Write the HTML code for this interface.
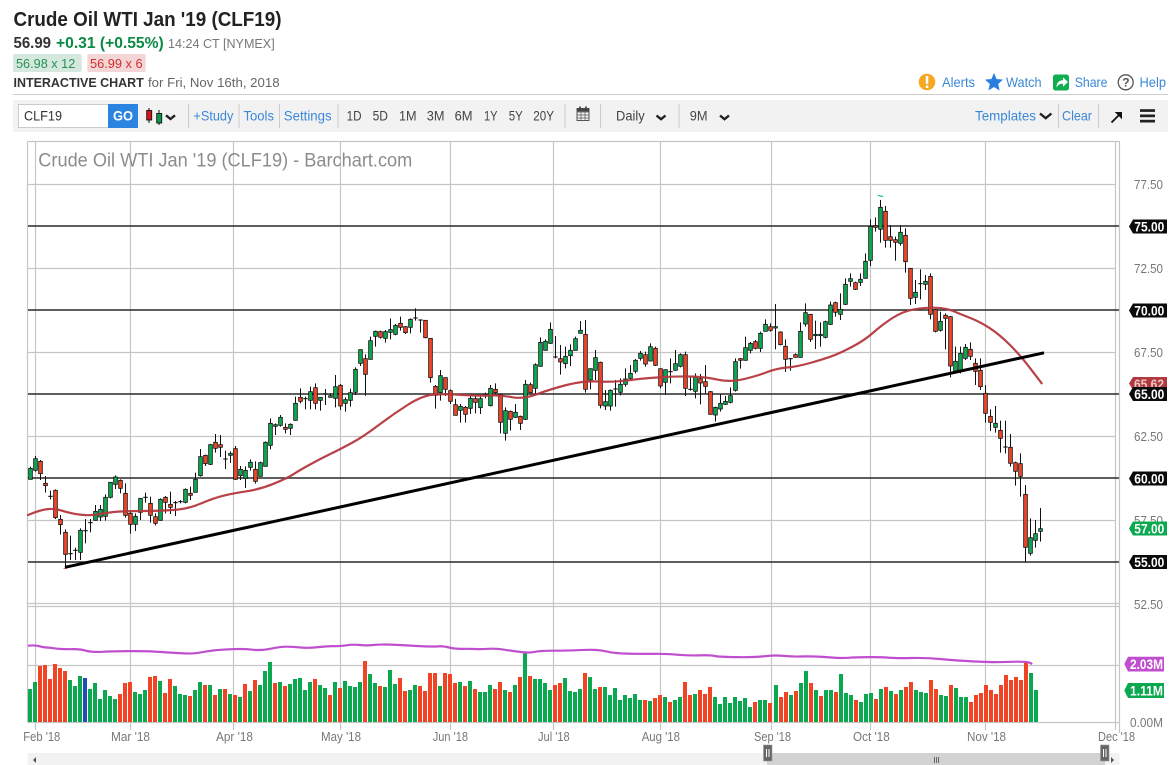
<!DOCTYPE html>
<html lang="en"><head><meta charset="utf-8"><title>Crude Oil WTI Jan '19 (CLF19)</title>
<style>
html,body{margin:0;padding:0;background:#fff;width:1173px;height:765px;overflow:hidden}
svg{display:block;position:absolute;left:0;top:0}
text{font-family:"Liberation Sans",sans-serif}
.b{fill:#3b88d8;font-size:14px}
.k{fill:#444;font-size:13.5px}
.ax{fill:#777;font-size:13px}
.tg{fill:#fff;font-size:14px;font-weight:bold}
.dt{fill:#777;font-size:13px}
</style></head><body>
<svg xmlns="http://www.w3.org/2000/svg" width="1173" height="765" viewBox="0 0 1173 765">
<!-- header -->
<text x="13.5" y="26" font-size="20" font-weight="bold" fill="#222" textLength="268" lengthAdjust="spacingAndGlyphs">Crude Oil WTI Jan '19 (CLF19)</text>
<text x="13.5" y="48" font-size="16" font-weight="bold" fill="#333" textLength="37.5" lengthAdjust="spacingAndGlyphs">56.99</text>
<text x="56" y="48" font-size="16" font-weight="bold" fill="#0b8a45" textLength="107.7" lengthAdjust="spacingAndGlyphs">+0.31 (+0.55%)</text>
<text x="168" y="48" font-size="13" fill="#777" textLength="106.7" lengthAdjust="spacingAndGlyphs">14:24 CT [NYMEX]</text>
<rect x="13" y="54" width="68.7" height="18" rx="2" fill="#d4e8dd"/>
<text x="16" y="68" font-size="13" fill="#2a9159" textLength="59.3" lengthAdjust="spacingAndGlyphs">56.98 x 12</text>
<rect x="87.3" y="54" width="58.4" height="18" rx="2" fill="#f4d6d6"/>
<text x="90" y="68" font-size="13" fill="#d32f2f" textLength="52.6" lengthAdjust="spacingAndGlyphs">56.99 x 6</text>
<text x="13.5" y="87" font-size="13" font-weight="bold" fill="#333" textLength="130.3" lengthAdjust="spacingAndGlyphs">INTERACTIVE CHART</text>
<text x="148" y="87" font-size="13" fill="#666" textLength="131.6" lengthAdjust="spacingAndGlyphs">for Fri, Nov 16th, 2018</text>
<rect x="13" y="94" width="1155" height="1" fill="#ccc"/>
<!-- top-right actions -->
<circle cx="927" cy="82" r="8.3" fill="#f7a823"/><rect x="925.8" y="76" width="2.5" height="8" fill="#fff"/><rect x="925.8" y="85.5" width="2.5" height="2.5" fill="#fff"/>
<text x="942" y="87" class="b" textLength="33" lengthAdjust="spacingAndGlyphs">Alerts</text>
<polygon points="994,73 996.6,79 1003,79.6 998.2,84 999.6,90.5 994,87 988.4,90.5 989.8,84 985,79.6 991.4,79" fill="#2a7fde"/>
<text x="1006" y="87" class="b" textLength="35.6" lengthAdjust="spacingAndGlyphs">Watch</text>
<rect x="1053" y="74.5" width="16" height="16" rx="2.5" fill="#0fae4f"/><path d="M1056.5 87.5c0-5 2.7-7.3 6.5-7.3v-3l5 4.8-5 4.8v-3c-3 0-4.8.9-6.5 3.7z" fill="#fff"/>
<text x="1074.7" y="87" class="b" textLength="32.8" lengthAdjust="spacingAndGlyphs">Share</text>
<circle cx="1125.7" cy="82.3" r="7.5" fill="none" stroke="#555" stroke-width="1.3"/><text x="1122.3" y="86.7" font-size="12" font-weight="bold" fill="#555">?</text>
<text x="1139.5" y="87" class="b" textLength="26.5" lengthAdjust="spacingAndGlyphs">Help</text>
<!-- toolbar -->
<rect x="13" y="100" width="1155" height="32" fill="#f2f2f2"/>
<rect x="18.5" y="104.5" width="90" height="23" fill="#fff" stroke="#ccc"/>
<text x="24" y="120.5" font-size="14" fill="#333" textLength="38" lengthAdjust="spacingAndGlyphs">CLF19</text>
<rect x="108" y="104" width="30" height="24" fill="#2a84e0"/>
<text x="113" y="120.5" font-size="14" font-weight="bold" fill="#fff" textLength="20" lengthAdjust="spacingAndGlyphs">GO</text>
<path d="M149 108v15M159 110v15" stroke="#111" fill="none"/>
<rect x="146.7" y="110.5" width="5" height="9.5" fill="#d6141a" stroke="#111" stroke-width=".9"/>
<rect x="156.7" y="113.500" width="5" height="9.5" fill="#079a48" stroke="#111" stroke-width=".9"/>
<g fill="none" stroke="#222" stroke-width="2.4"><path d="M166 115.3l4.500 3.700 4.500-3.700"/><path d="M656.5 115.5l4.500 3.700 4.500-3.700"/><path d="M720 115.5l4.500 3.700 4.500-3.700"/><path d="M1040 113.5l5.700 4.700 5.700-4.700"/></g>
<g fill="#ccc"><rect x="188" y="104" width="1" height="24"/><rect x="238.5" y="104" width="1" height="24"/><rect x="279" y="104" width="1" height="24"/><rect x="337.5" y="104" width="1" height="24"/><rect x="564.5" y="104" width="1" height="24"/><rect x="600" y="104" width="1" height="24"/><rect x="678.5" y="104" width="1" height="24"/><rect x="1058" y="104" width="1" height="24"/><rect x="1098" y="104" width="1" height="24"/></g>
<text x="193.4" y="120.5" class="b" textLength="40" lengthAdjust="spacingAndGlyphs">+Study</text>
<text x="243.5" y="120.5" class="b" textLength="30.5" lengthAdjust="spacingAndGlyphs">Tools</text>
<text x="283.8" y="120.5" class="b" textLength="47.8" lengthAdjust="spacingAndGlyphs">Settings</text>
<text x="346.6" y="120.5" class="k" textLength="15" lengthAdjust="spacingAndGlyphs">1D</text>
<text x="372.6" y="120.5" class="k" textLength="15.4" lengthAdjust="spacingAndGlyphs">5D</text>
<text x="399" y="120.5" class="k" textLength="17.6" lengthAdjust="spacingAndGlyphs">1M</text>
<text x="426.8" y="120.5" class="k" textLength="17.7" lengthAdjust="spacingAndGlyphs">3M</text>
<text x="454.6" y="120.5" class="k" textLength="18" lengthAdjust="spacingAndGlyphs">6M</text>
<text x="484" y="120.5" class="k" textLength="13.6" lengthAdjust="spacingAndGlyphs">1Y</text>
<text x="508.8" y="120.5" class="k" textLength="14" lengthAdjust="spacingAndGlyphs">5Y</text>
<text x="533.3" y="120.5" class="k" textLength="20.7" lengthAdjust="spacingAndGlyphs">20Y</text>
<g fill="none" stroke="#555"><rect x="577" y="108.5" width="12" height="12" stroke-width="1"/><path d="M577 112h12M577 115h12M577 118h12M581 112v8M585 112v8" stroke-width=".7"/><path d="M580 106.5v3M586 106.5v3" stroke="#222" stroke-width="1.5"/></g>
<rect x="577" y="108" width="12" height="3.5" fill="#444"/>
<text x="616" y="120.5" class="k" textLength="28.7" lengthAdjust="spacingAndGlyphs">Daily</text>
<text x="689.8" y="120.5" class="k" textLength="17.8" lengthAdjust="spacingAndGlyphs">9M</text>
<text x="975" y="120.5" class="b" textLength="61" lengthAdjust="spacingAndGlyphs">Templates</text>
<text x="1062" y="120.5" class="b" textLength="30" lengthAdjust="spacingAndGlyphs">Clear</text>
<path d="M1111.5 122.5l8-8" fill="none" stroke="#111" stroke-width="1.9"/><polygon points="1122,112 1122,119.3 1114.700,112" fill="#111"/>
<rect x="1140" y="109.2" width="15" height="2.7" fill="#222"/><rect x="1140" y="114.5" width="15" height="2.7" fill="#222"/><rect x="1140" y="119.8" width="15" height="2.7" fill="#222"/>
<!-- chart frame and grid -->
<g id="grid" fill="none" stroke="#c6c6c6" stroke-width="1.2">
<path d="M27.5 141.5H1119.5V733M27.5 141.5V722M1115.5 141.5V730M27.5 603.5H1119.5M27.5 606.5H1119.5M27.5 722.5H1119.5M27.5 665.5H1119.5"/>
<path d="M28 184.5H1116M28 268.5H1116M28 352.5H1116M28 436.5H1116M28 520.5H1116"/>
<path d="M35.5 141V730M130.5 141V730M233.5 141V730M340.5 141V730M450.5 141V730M553.5 141V730M660.5 141V730M771.5 141V730M870.5 141V730M985.5 141V730"/>
</g>
<text x="38.3" y="166.7" font-size="19" fill="#8c8c8c" textLength="374" lengthAdjust="spacingAndGlyphs">Crude Oil WTI Jan '19 (CLF19) - Barchart.com</text>
<g fill="none" stroke="#2a2a2a" stroke-width="1.4"><path d="M28 226H1119M28 310H1119M28 394H1119M28 478H1119M28 562H1119"/></g>
<g id="vol"></g>
<g id="candles"></g>
<path d="M878 196q1.5-1 2.5 0t2.5 0" fill="none" stroke="#1ec96f" stroke-width="1.2"/>
<path d="M63.5 568.3h3.5" stroke="#f04424" stroke-width="1"/>
<path id="ma" fill="none" stroke="#b3383d" stroke-width="2.2" stroke-linejoin="round" stroke-linecap="round" opacity=".95" data-p="28,515 40,510 55,508.3 70,513.3 90,516 113,511.7 133,511 167,510.7 190,508.3 213,498.3 233,493.3 260,489.3 287,478.3 300,470 320,459 340,449.3 363.3,436.7 393.3,414 423.3,395 446.7,394 480,396 500,395 523.3,399.3 550,389.3 583,380.7 613,382.3 643,378.3 683,376 707,377.3 730,382.3 757,376 777,368.3 797,366.7 823,359.3 840,353.3 865,340 881.7,325 903.3,311 926.7,307.3 946.7,308.3 960,314 980,321.7 1000,335 1020,355 1041.7,383.3" d="M28 515L1041.7 383.3"/>
<path d="M65 567.3L1044 352.8" stroke="#000" stroke-width="3" fill="none"/>
<path id="pu" fill="none" stroke="#c04fd0" stroke-width="2.2" stroke-linejoin="round" data-p="28,645.7 35,645 43.3,647.3 50,647.7 56.7,648.7 66.7,649.3 80,649 91.7,652.3 113.3,651.3 143.3,651 166.7,652.3 191.7,654 206.7,651.3 220,649.7 243.3,648.7 261.7,650.7 280,646.7 293.3,646.7 308.3,648.3 328.3,646 340,646.3 353.3,644.3 366.7,645.7 380,644.3 400,645 416.7,646 433.3,646.7 443.3,646 455,649 470,648.7 480,649.3 496.7,648.3 511.7,651 530,653 540,650.7 566.7,650.7 586.7,649.7 600,650 615,653.3 640,654 666.7,653.7 686.7,655.7 710,655 720,657 753.3,657.3 766.7,656 776.7,655.3 793.3,656.7 806,656.3 823,656.7 840,658.3 856.3,657.3 879.7,657 896.3,658.3 926.3,657.7 953,660.3 979.7,661.7 996.3,662.3 1026.3,661.3 1032.3,664" d="M28 645.7L1032.3 664"/>
<!-- price axis -->
<g><text x="1134" y="189" class="ax" textLength="29" lengthAdjust="spacingAndGlyphs">77.50</text>
<text x="1134" y="273" class="ax" textLength="29" lengthAdjust="spacingAndGlyphs">72.50</text>
<text x="1134" y="357" class="ax" textLength="29" lengthAdjust="spacingAndGlyphs">67.50</text>
<text x="1134" y="441" class="ax" textLength="29" lengthAdjust="spacingAndGlyphs">62.50</text>
<text x="1134" y="525" class="ax" textLength="29" lengthAdjust="spacingAndGlyphs">57.50</text>
<text x="1134" y="609" class="ax" textLength="29" lengthAdjust="spacingAndGlyphs">52.50</text>
<text x="1130" y="727" class="ax" textLength="33" lengthAdjust="spacingAndGlyphs">0.00M</text></g>
<g>
<polygon points="1129,383.5 1133,377 1167,377 1167,390 1133,390" fill="#b3383d"/><text x="1134" y="389" font-size="14" fill="#e8c8c8" font-weight="bold" textLength="30" lengthAdjust="spacingAndGlyphs">65.62</text>
<g fill="#0a0a0a"><polygon points="1129,226.5 1133,219.5 1167,219.5 1167,233.5 1133,233.5"/><polygon points="1129,310.5 1133,303.5 1167,303.5 1167,317.5 1133,317.5"/><polygon points="1129,394 1133,387 1167,387 1167,401 1133,401"/><polygon points="1129,478.5 1133,471.5 1167,471.5 1167,485.5 1133,485.5"/><polygon points="1129,562 1133,555 1167,555 1167,569 1133,569"/></g>
<polygon points="1129,528.5 1133,521.5 1167,521.5 1167,535.5 1133,535.5" fill="#0aa84f"/>
<text x="1134.3" y="231.5" class="tg" textLength="30" lengthAdjust="spacingAndGlyphs">75.00</text>
<text x="1134.3" y="315.5" class="tg" textLength="30" lengthAdjust="spacingAndGlyphs">70.00</text>
<text x="1134.3" y="399" class="tg" textLength="30" lengthAdjust="spacingAndGlyphs">65.00</text>
<text x="1134.3" y="483.5" class="tg" textLength="30" lengthAdjust="spacingAndGlyphs">60.00</text>
<text x="1134.3" y="533.5" class="tg" textLength="30" lengthAdjust="spacingAndGlyphs">57.00</text>
<text x="1134.3" y="567" class="tg" textLength="30" lengthAdjust="spacingAndGlyphs">55.00</text>
<polygon points="1124.3,664 1128,656.7 1164,656.7 1164,671.5 1128,671.5" fill="#c04fd0"/>
<polygon points="1124.3,690.5 1128,683 1164,683 1164,698 1128,698" fill="#0aa84f"/>
<text x="1130" y="669" class="tg" textLength="33" lengthAdjust="spacingAndGlyphs">2.03M</text>
<text x="1130" y="695.5" class="tg" textLength="33" lengthAdjust="spacingAndGlyphs">1.11M</text>
</g>
<!-- date axis -->
<g><text x="23.3" y="741" class="dt" textLength="37" lengthAdjust="spacingAndGlyphs">Feb '18</text>
<text x="111" y="741" class="dt" textLength="39" lengthAdjust="spacingAndGlyphs">Mar '18</text>
<text x="216" y="741" class="dt" textLength="37" lengthAdjust="spacingAndGlyphs">Apr '18</text>
<text x="321" y="741" class="dt" textLength="40" lengthAdjust="spacingAndGlyphs">May '18</text>
<text x="432.7" y="741" class="dt" textLength="35.3" lengthAdjust="spacingAndGlyphs">Jun '18</text>
<text x="538" y="741" class="dt" textLength="31.7" lengthAdjust="spacingAndGlyphs">Jul '18</text>
<text x="641.7" y="741" class="dt" textLength="38.3" lengthAdjust="spacingAndGlyphs">Aug '18</text>
<text x="754" y="741" class="dt" textLength="37" lengthAdjust="spacingAndGlyphs">Sep '18</text>
<text x="853" y="741" class="dt" textLength="36.7" lengthAdjust="spacingAndGlyphs">Oct '18</text>
<text x="967" y="741" class="dt" textLength="39" lengthAdjust="spacingAndGlyphs">Nov '18</text>
<text x="1098" y="741" class="dt" textLength="37" lengthAdjust="spacingAndGlyphs">Dec '18</text></g>
<!-- scrollbar -->
<rect x="27.5" y="753" width="1092" height="12" fill="#f2f2f2"/>
<rect x="767" y="753" width="338" height="12" fill="#d2d2d2"/>
<path d="M36 757v6l-3-3zM1111 757v6l3-3z" fill="#555"/>
<rect x="763.5" y="745" width="8.5" height="16" fill="#666" stroke="#999" stroke-width=".6"/><path d="M766.5 749v8M769 749v8" stroke="#fff" stroke-width="1"/>
<rect x="1100.5" y="745" width="8.5" height="16" fill="#666" stroke="#999" stroke-width=".6"/><path d="M1103.5 749v8M1106 749v8" stroke="#fff" stroke-width="1"/>
<path d="M934.5 757v6M936.5 757v6M938.5 757v6" stroke="#666" stroke-width="1"/>
</svg>
<script>
var NS="http://www.w3.org/2000/svg";
function el(p,n,a){var e=document.createElementNS(NS,n);for(var k in a)e.setAttribute(k,a[k]);p.appendChild(e);return e;}
var G="#0aa84f",R="#f04424";
var segs=[
[0,370,"91 290 295 328 328 g,106 258 266 301 305 g,121 270 274 311 330 r,136 318 340 347 368 r,151 362 379 380 388 d,166 358 361 443 447 r,181 435 448 464 494 r,196 478 487 553 595 r,211 497 551 552 570 d,226 533 541 542 570 d,241 475 481 547 570 g,256 447 482 483 520 d,271 447 458 459 487 d,286 405 424 451 452 g,301 405 418 441 453 g,316 373 382 439 452 g,331 337 337 382 385 g,346 316 321 343 357 g,361 328 331 355 370 r,376 340 370 436 443 r,391 425 430 463 491 r,406 430 439 463 483 g,421 385 385 427 450 g,436 368 382 383 398 d,451 380 400 436 458 r,466 430 440 460 466 r,481 385 388 451 452 g,496 378 382 397 430 r,511 365 403 412 432 r,526 393 398 399 438 d,541 390 395 396 400 d,556 355 358 397 400 g,571 350 370 376 390 r,586 308 328 367 368 g,601 237 260 317 320 g,616 254 256 281 288 r,631 222 224 283 285 g,646 192 217 235 248 r,661 195 224 232 261 r,676 242 267 268 297 d,691 244 250 256 279 g,706 228 236 328 330 r,721 288 298 317 330 g,736 289 301 325 354 g,751 268 277 292 302 g,766 274 298 334 341 r,781 275 278 319 320 g,796 214 217 289 290 g,811 145 160 226 238 g,826 160 164 169 195 g,841 135 142 166 170 g,856 160 172 178 190 r,871 160 163 175 195 g"],
[280,290,"46 320 340 391 392 g,61 295 322 334 340 r,76 320 326 327 358 d,91 290 305 331 358 g,106 280 293 340 358 r,121 322 322 331 362 g,136 297 312 313 345 d,151 310 317 322 323 g,166 255 290 325 352 g,181 282 286 348 360 r,196 322 329 340 365 g,211 296 308 331 350 g,226 232 238 307 315 g,241 178 179 220 228 g,256 193 206 253 317 r,271 140 152 208 209 g,286 122 124 139 170 g,301 122 125 142 146 r,316 120 125 145 158 g,331 85 119 127 148 g,346 102 106 133 136 g,361 80 100 112 122 r,376 108 110 128 132 r,391 85 88 112 130 g,406 55 84 85 92 d,421 88 90 91 128 d,436 90 91 143 145 r,451 145 145 263 278 r,466 285 289 316 356 r,481 240 257 308 332 g,496 262 263 298 318 r,511 298 302 334 342 r,526 327 344 376 376 r,541 342 349 361 398 g,556 348 352 373 398 r,571 318 325 355 372 g,586 318 326 337 370 r,601 320 326 353 372 g,616 308 314 315 325 d,631 285 295 347 349 g,646 280 298 308 312 r,661 310 313 397 430 r,676 352 362 430 452 g,691 362 364 388 422 r,706 342 367 382 384 g,721 377 379 400 420 r,736 270 283 388 390 g,751 278 284 308 310 r,766 220 224 295 315 g,781 142 157 229 230 g,796 148 154 181 182 g,811 97 118 160 162 g,826 138 201 202 205 d,841 165 206 216 254 r,856 170 199 221 235 g,871 163 181 197 228 g,886 140 146 181 182 g"],
[570,290,"31 93 121 130 130 g,46 90 133 298 308 r,61 235 236 270 298 g,76 180 203 241 270 g,91 215 217 346 355 r,106 300 335 348 360 g,121 298 301 348 362 g,136 270 297 298 350 d,151 265 283 307 316 g,166 235 267 283 290 g,181 225 250 265 267 g,196 207 211 244 250 g,211 183 190 205 212 g,226 185 194 222 230 r,241 160 170 213 214 g,256 170 175 226 228 r,271 235 236 288 295 r,286 238 239 277 315 g,301 205 245 246 280 d,316 180 221 241 242 g,331 190 194 229 232 g,346 185 194 295 318 r,361 260 298 299 302 d,376 250 262 304 325 g,391 252 266 279 343 r,406 225 275 289 310 r,421 303 305 373 374 r,436 350 352 375 395 g,451 312 340 357 365 g,466 318 334 343 345 g,481 292 317 337 340 g,496 205 215 301 305 g,511 204 206 211 236 r,526 140 173 211 212 g,541 156 160 181 190 g,556 150 155 175 178 r,571 125 130 175 186 g,586 88 103 124 125 g,601 100 110 121 125 r,616 42 110 114 178 g,631 124 126 164 166 r,646 148 169 208 246 r,661 205 206 207 242 d,676 190 194 202 203 r,691 97 124 202 203 g,706 40 68 102 110 g,721 72 73 148 156 r,736 92 133 137 177 g,751 97 133 137 170 g,766 92 95 142 145 g,781 35 45 103 105 g,796 35 38 67 80 r,811 10 58 73 90 g"],
[840,190,"16 265 283 343 345 g,31 250 266 274 290 g,46 275 278 298 300 r,61 250 268 277 288 g,76 190 214 265 266 g,91 88 109 211 228 g,106 82 107 112 125 r,121 30 52 118 158 g,136 48 64 151 173 r,151 105 140 151 173 r,166 140 149 157 212 r,181 105 127 160 167 g,196 115 136 215 248 r,211 235 235 325 345 r,226 270 307 322 342 g,241 238 281 282 328 d,256 255 274 283 300 g,271 250 259 373 388 r,286 357 359 424 427 r,301 365 394 421 425 g,316 370 376 385 478 r,331 378 380 528 562 r,346 470 514 543 545 g,361 470 490 540 550 g,376 462 472 505 510 g,391 457 478 499 510 r,406 505 520 544 585 r,421 505 541 590 600 r"],
[950,370,"106 45 70 130 158 r,121 118 139 157 183 r,136 108 160 172 188 g,151 152 181 205 248 r,166 152 231 232 250 d,181 192 232 280 290 r,196 275 278 304 347 r,211 250 281 319 380 r,226 345 373 532 578 r,241 445 503 550 557 g,256 450 491 511 533 g,271 414 476 484 515 g"]
];
var c=document.getElementById("candles");
segs.forEach(function(s){s[2].split(",").forEach(function(row){
 var p=row.split(" "),x=Math.floor(s[0]+(+p[0])/3)+.5,y=function(v){return s[1]+(+v)/3;};
 el(c,"line",{x1:x,x2:x,y1:y(p[1]),y2:y(p[4]),stroke:"#111","stroke-width":1});
 if(p[5]=="d"){el(c,"line",{x1:x-2.2,x2:x+2.2,y1:y(p[2]),y2:y(p[2]),stroke:"#111","stroke-width":1.1});}
 else{el(c,"rect",{x:x-1.85,y:y(p[2]),width:3.7,height:Math.max(1,y(p[3])-y(p[2])),fill:p[5]=="g"?G:R,stroke:"#111","stroke-width":.8});}
});});
var B="#1f4fb5",v=document.getElementById("vol");
var vols=[
[0,90,"192g 171g 123r 120r 162r 117r 129r 138r 165g 183g 153g 159b 192g 174g 222g 195g 213g 222g 207r 174r 171r 201g 207g 195g 156r 153r 168g 204r 162r 183g 207g 210g 213r 195g 171g 180r 180g 210r 192g 192r 207g 210r 216g 177r 198g 165r 180g 138g 111g 174r 171g 183r 177g 162g 159g 195g 171g 162r 180g 189g 210r 171g 189r 168g 183g 186g 171g 108r 147g 174g 183r 186g 135g 177g 159r"],
[400,15,"198r 195g 180g 183r 198r 144r 144r 183g 144r 147r 174r 171g 183r 168g 192r 201g 201g 180g 192r 171r 195g 201r 180g 156r 85g 153r 162g 162g 174g 195g 180r 174r 159g 198g 201g 192g 144r 156g 192g 186r 186g 210g 189g 225g 210g 219g 207g 225g 225r 228g 219r 210r 216g 231r 225g 216g 171r 210r 207g 195r 207r 186r 216g 237g 216g 234g 216g 228g 219g 246g 231r 225g 225g 234r"],
[773,9,"180g 216r 201r 210g 198r 174g 138g 174r 195g 213r 195g 195g 201r 147g 204g 210g 225r 231g 207g 204g 222r 192g 186r 198g 207r 195g 186r 171r 195g 201g 204g 165r 192r 210g 213g 180r 189g 216g 216g 231r 210r 204r 180r 195r 207r 180r 150r 165r 156r 165r 111r 144g 195g"]
];
vols.forEach(function(s){s[2].split(" ").forEach(function(t,i){
 var top=parseInt(t,10),col=t.charAt(t.length-1),cx=s[0]+(s[1]+15*i)/3,y=625+top/3;
 el(v,"rect",{x:cx-2,y:y,width:4,height:722-y,fill:col=="g"?G:col=="b"?B:R});
});});
["ma","pu"].forEach(function(id){
 var e=document.getElementById(id),pts=e.getAttribute("data-p").split(" ").map(function(q){return q.split(",").map(Number);});
 e.removeAttribute("data-p");
 var d="M"+pts[0][0]+" "+pts[0][1];
 for(var i=1;i<pts.length-1;i++){var mx=(pts[i][0]+pts[i+1][0])/2,my=(pts[i][1]+pts[i+1][1])/2;d+="Q"+pts[i][0]+" "+pts[i][1]+" "+mx+" "+my;}
 var l=pts[pts.length-1];d+="L"+l[0]+" "+l[1];e.setAttribute("d",d);
});
</script>
</body></html>
